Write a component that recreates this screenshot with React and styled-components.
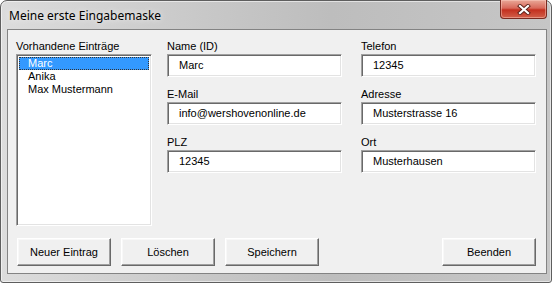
import React from 'react';
import styled, { createGlobalStyle, css } from 'styled-components';

const GlobalStyle = createGlobalStyle`
  body {
    margin: 0;
    background: #ffffff;
    font-family: "Liberation Sans", Arial, sans-serif;
  }
`;

const Window = styled.div`
  width: 552px;
  height: 283px;
  box-sizing: border-box;
  display: flex;
  flex-direction: column;
  padding: 0 4px 8px 6px;
  border: 1px solid #5e5e5e;
  border-radius: 7px 7px 3px 3px;
  background: linear-gradient(to right, #dcdcdc 0%, #c9c9c9 35%, #bdbdbd 60%, #c6c6c6 100%);
  box-shadow: inset 0 0 0 1px rgba(255, 255, 255, 0.55);
`;

const TitleBar = styled.div`
  height: 28px;
  display: flex;
  align-items: center;
  justify-content: space-between;
  padding-left: 2px;
`;

const Title = styled.span`
  font-family: "Noto Sans", "Open Sans", sans-serif;
  font-size: 12px;
  color: #000;
  text-shadow: 0 0 6px rgba(255, 255, 255, 0.9);
  margin-top: 1px;
`;

const CloseButton = styled.div`
  align-self: flex-start;
  margin-top: -1px;
  width: 47px;
  height: 19px;
  box-sizing: border-box;
  border: 1px solid #7a2a20;
  border-top: none;
  border-radius: 0 0 4px 4px;
  background: linear-gradient(to bottom, #e9a898 0%, #d8685a 45%, #c3301f 55%, #d2604a 100%);
  box-shadow: inset 0 0 0 1px rgba(255, 210, 200, 0.45);
  display: flex;
  align-items: center;
  justify-content: center;
`;

const Client = styled.div`
  flex: 1;
  border: 1px solid #838383;
  background: #f0f0f0;
  padding: 10px 9px 7px 8px;
  display: flex;
  flex-direction: column;
  gap: 12px;
  font-size: 11px;
  color: #000;
`;

const TopRow = styled.div`
  display: flex;
  gap: 15px;
  height: 186px;
`;

const ListColumn = styled.div`
  width: 136px;
  display: flex;
  flex-direction: column;
  gap: 1px;
`;

const Label = styled.div`
  height: 13px;
  line-height: 13px;
  padding-left: ${({ $indent }) => $indent || 0}px;
`;

const sunken = css`
  box-sizing: border-box;
  background: #ffffff;
  border-style: solid;
  border-width: 1px;
  border-color: #a0a0a0 #ffffff #ffffff #a0a0a0;
  box-shadow: inset 1px 1px 0 #696969, inset -1px -1px 0 #e3e3e3;
`;

const ListBox = styled.div`
  ${sunken};
  flex: 1;
  padding: 2px 2px;
`;

const ListItem = styled.div`
  height: 13px;
  line-height: 13px;
  padding-left: 9px;
  ${({ $selected }) =>
    $selected &&
    css`
      background: #3399ff;
      color: #ffffff;
      outline: 1px dotted #333;
      outline-offset: -1px;
    `}
`;

const Fields = styled.div`
  display: grid;
  grid-template-columns: 175px 175px;
  column-gap: 19px;
  row-gap: 11px;
  align-content: start;
`;

const Field = styled.div`
  display: flex;
  flex-direction: column;
  gap: 1px;
`;

const TextBox = styled.div`
  ${sunken};
  height: 23px;
  line-height: 20px;
  padding-left: ${({ $indent }) => $indent}px;
`;

const ButtonRow = styled.div`
  display: flex;
  gap: 10px;
  padding-left: 1px;
  padding-right: 1px;
`;

const Button = styled.div`
  width: 94px;
  height: 28px;
  box-sizing: border-box;
  display: flex;
  align-items: center;
  justify-content: center;
  background: #f0f0f0;
  border-style: solid;
  border-width: 1px;
  border-color: #ffffff #696969 #696969 #ffffff;
  box-shadow: inset -1px -1px 0 #a0a0a0, inset 1px 1px 0 #f8f8f8;
  ${({ $right }) => $right && 'margin-left: auto;'}
`;

const entries = ['Marc', 'Anika', 'Max Mustermann'];

const fields = [
  { label: 'Name (ID)', value: 'Marc', indent: 11 },
  { label: 'Telefon', value: '12345', indent: 11 },
  { label: 'E-Mail', value: 'info@wershovenonline.de', indent: 11 },
  { label: 'Adresse', value: 'Musterstrasse 16', indent: 11 },
  { label: 'PLZ', value: '12345', indent: 11 },
  { label: 'Ort', value: 'Musterhausen', indent: 11 },
];

const CloseGlyph = () => (
  <svg width="14" height="11" viewBox="0 0 14 11">
    <path d="M3 2 L11 9 M11 2 L3 9" stroke="#5a2018" strokeWidth="4" strokeLinecap="square" />
    <path d="M3 2 L11 9 M11 2 L3 9" stroke="#ffffff" strokeWidth="2.2" strokeLinecap="square" />
  </svg>
);

const App = () => (
  <>
    <GlobalStyle />
    <Window>
      <TitleBar>
        <Title>Meine erste Eingabemaske</Title>
        <CloseButton>
          <CloseGlyph />
        </CloseButton>
      </TitleBar>
      <Client>
        <TopRow>
          <ListColumn>
            <Label>Vorhandene Einträge</Label>
            <ListBox>
              {entries.map((name, i) => (
                <ListItem key={name} $selected={i === 0}>
                  {name}
                </ListItem>
              ))}
            </ListBox>
          </ListColumn>
          <Fields>
            {fields.map((f) => (
              <Field key={f.label}>
                <Label>{f.label}</Label>
                <TextBox $indent={f.indent}>{f.value}</TextBox>
              </Field>
            ))}
          </Fields>
        </TopRow>
        <ButtonRow>
          <Button>Neuer Eintrag</Button>
          <Button>Löschen</Button>
          <Button>Speichern</Button>
          <Button $right>Beenden</Button>
        </ButtonRow>
      </Client>
    </Window>
  </>
);

export default App;
